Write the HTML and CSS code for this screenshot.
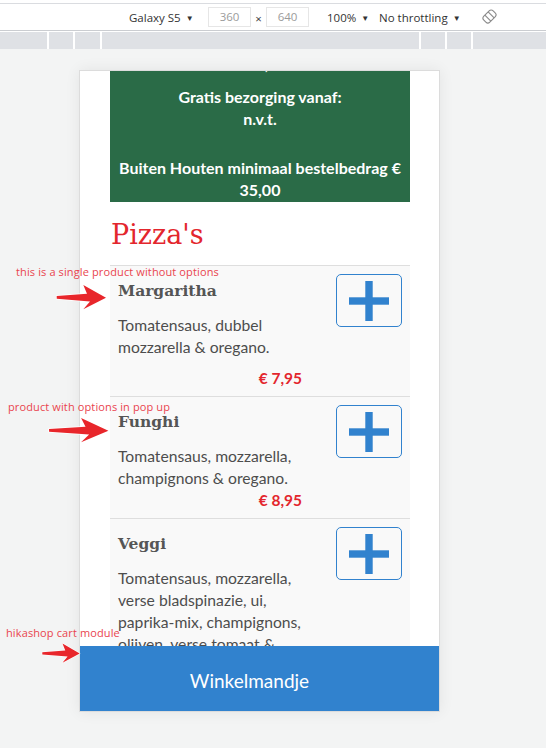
FILE: index.html
```html
<!DOCTYPE html>
<html lang="nl">
<head>
<meta charset="utf-8">
<title>Pizza's</title>
<link rel="stylesheet" href="styles.css">
</head>
<body>
<div class="devtools">
  <div class="toolbar">
    <span class="tb-device">Galaxy S5 <span class="caret">&#9660;</span></span>
    <span class="tb-dim">360</span>
    <span class="tb-x">&times;</span>
    <span class="tb-dim">640</span>
    <span class="tb-zoom">100% <span class="caret">&#9660;</span></span>
    <span class="tb-throttle">No throttling <span class="caret">&#9660;</span></span>
    <svg class="tb-rotate" viewBox="0 0 16 16" width="15" height="15">
      <g transform="rotate(45 8 8)" fill="none" stroke="#8a8a8a" stroke-width="1.2">
        <rect x="3.5" y="1" width="9" height="14" rx="3"/>
        <line x1="3.5" y1="5.5" x2="12.5" y2="5.5"/>
        <line x1="3.5" y1="10.5" x2="12.5" y2="10.5"/>
      </g>
    </svg>
  </div>
  <div class="ruler">
    <span class="seg seg-a"></span>
    <span class="seg seg-b"></span>
    <span class="seg seg-c"></span>
    <span class="seg seg-d"></span>
    <span class="seg seg-b"></span>
    <span class="seg seg-b"></span>
    <span class="seg seg-rest"></span>
  </div>
</div>

<main class="stage">
  <div class="phone">
    <div class="viewport">
      <div class="page scrolled">
        <section class="info">
          <p class="info-p1">&euro; 15,00</p>
          <p class="info-p2">Gratis bezorging vanaf:<br>n.v.t.</p>
          <p>Buiten Houten minimaal bestelbedrag &euro;<br>35,00</p>
        </section>

        <h2 class="cat-title">Pizza's</h2>

        <ul class="products">
          <li class="product product--first">
            <div class="product-info">
              <h3 class="product-name">Margaritha</h3>
              <p class="product-desc">Tomatensaus, dubbel<br>mozzarella &amp; oregano.</p>
              <p class="product-price">&euro; 7,95</p>
            </div>
            <button class="add-btn" type="button" aria-label="Toevoegen">
              <svg viewBox="0 0 40 40" width="40" height="40"><rect x="0" y="16.3" width="40" height="7.4"/><rect x="16.3" y="0" width="7.4" height="40"/></svg>
            </button>
          </li>
          <li class="product">
            <div class="product-info">
              <h3 class="product-name">Funghi</h3>
              <p class="product-desc">Tomatensaus, mozzarella,<br>champignons &amp; oregano.</p>
              <p class="product-price">&euro; 8,95</p>
            </div>
            <button class="add-btn" type="button" aria-label="Toevoegen">
              <svg viewBox="0 0 40 40" width="40" height="40"><rect x="0" y="16.3" width="40" height="7.4"/><rect x="16.3" y="0" width="7.4" height="40"/></svg>
            </button>
          </li>
          <li class="product">
            <div class="product-info">
              <h3 class="product-name">Veggi</h3>
              <p class="product-desc">Tomatensaus, mozzarella,<br>verse bladspinazie, ui,<br>paprika-mix, champignons,<br>olijven, verse tomaat &amp;</p>
            </div>
            <button class="add-btn" type="button" aria-label="Toevoegen">
              <svg viewBox="0 0 40 40" width="40" height="40"><rect x="0" y="16.3" width="40" height="7.4"/><rect x="16.3" y="0" width="7.4" height="40"/></svg>
            </button>
          </li>
        </ul>
      </div>
    </div>
    <div class="cart">Winkelmandje</div>
  </div>
</main>

<div class="notes">
  <span class="note note-1">this is a single product without options</span>
  <svg class="arrow arrow-1" viewBox="0 0 54 28" preserveAspectRatio="none"><polygon points="1.7,13 32,10.8 28.3,2 51,14.7 28.3,26.3 35,18.5 1.7,15.8"/></svg>
  <span class="note note-2">product with options in pop up</span>
  <svg class="arrow arrow-2" viewBox="0 0 54 28" preserveAspectRatio="none"><polygon points="1.7,13 32,10.8 28.3,2 51,14.7 28.3,26.3 35,18.5 1.7,15.8"/></svg>
  <span class="note note-3">hikashop cart module</span>
  <svg class="arrow arrow-3" viewBox="0 0 54 28" preserveAspectRatio="none"><polygon points="1.7,13 32,10.8 28.3,2 51,14.7 28.3,26.3 35,18.5 1.7,15.8"/></svg>
</div>
</body>
</html>
```

FILE: styles.css
```css
* { box-sizing: border-box; }

html, body {
  margin: 0;
  padding: 0;
}

body {
  position: relative;
  height: 748px;
  overflow: hidden;
  background: #f3f4f4;
  font-family: "Open Sans", "Noto Sans", sans-serif;
}

/* ---------- devtools chrome ---------- */
.devtools {
  background: #fff;
  padding-top: 3px;
}

.toolbar {
  height: 28px;
  border-top: 1px solid #dadce0;
  border-bottom: 1px solid #cbcdd1;
  display: flex;
  align-items: center;
  padding-left: 129px;
  font-size: 11.5px;
  color: #333;
}

.caret {
  font-size: 8px;
  vertical-align: 1px;
  margin-left: 2px;
}

.tb-device { width: 79px; white-space: nowrap; }

.tb-dim {
  width: 43px;
  height: 20px;
  border: 1px solid #e6e6e6;
  color: #9b9b9b;
  text-align: center;
  line-height: 18px;
}

.tb-x {
  width: 15px;
  text-align: center;
  color: #444;
  padding-top: 2px;
}

.tb-zoom { margin-left: 18px; width: 52px; white-space: nowrap; }
.tb-throttle { width: 103px; white-space: nowrap; }
.tb-rotate { display: block; margin-top: -2px; }

.ruler {
  margin-top: 1px;
  height: 17px;
  display: flex;
  gap: 2px;
  background: #fff;
}

.seg { background: #dfe1e5; height: 100%; }
.seg-a { width: 47px; }
.seg-b { width: 24px; }
.seg-c { width: 25px; }
.seg-d { width: 317px; }
.seg-rest { flex: 1; }

/* ---------- stage / phone ---------- */
.stage {
  padding: 21px 0 0 79px;
}

.phone {
  width: 361px;
  height: 642px;
  border: 1px solid #dcdcdc;
  background: #fff;
  display: flex;
  flex-direction: column;
  box-shadow: 0 0 14px rgba(0, 0, 0, 0.07);
}

.viewport {
  flex: 1;
  min-height: 0;
  overflow: hidden;
}

.page {
  padding: 0 29px 0 30px;
}

.scrolled { margin-top: -28px; }

.info {
  background: #2a6b47;
  color: #fff;
  text-align: center;
  font: 700 16px/22px Lato, "Open Sans", sans-serif;
  padding: 10px 4px 1px;
}

.info p { margin: 0; }
.info .info-p1 { margin-bottom: 11px; }
.info .info-p2 { margin-bottom: 27px; }

.cat-title {
  margin: 17px 0 14px 1px;
  font: 400 27px/32px "DejaVu Serif", serif;
  color: #e3262d;
}

.products {
  list-style: none;
  margin: 0;
  padding: 0;
}

.product {
  display: flex;
  align-items: flex-start;
  background: #f9f9f9;
  border-top: 1px solid #dedede;
  padding: 8px 8px 7px;
}

.product-info {
  flex: none;
  width: 184px;
}

.product-name {
  margin: 6px 0 0;
  font: 700 15.5px/22px "DejaVu Serif", serif;
  color: #555;
}

.product-desc {
  margin: 12px 0 0;
  font: 400 15.7px/22px Lato, "Open Sans", sans-serif;
  color: #4d4d4d;
  white-space: nowrap;
}

.product-price {
  margin: 0;
  text-align: right;
  font: 700 15.5px/22px Lato, "Open Sans", sans-serif;
  color: #e3262d;
}

.product--first .product-price { margin-top: 9px; }

.add-btn {
  margin-left: auto;
  width: 66px;
  height: 53px;
  padding: 0;
  border: 1px solid #3182ce;
  border-radius: 5px;
  background: transparent;
  display: flex;
  align-items: center;
  justify-content: center;
}

.add-btn svg { display: block; fill: #3182ce; }

.cart {
  flex: none;
  height: 65px;
  background: #3182ce;
  color: #fff;
  font: 400 19px Lato, "Open Sans", sans-serif;
  display: flex;
  align-items: center;
  justify-content: center;
  padding: 4px 20px 0 0;
}

/* ---------- annotations ---------- */
.note {
  position: absolute;
  font: 400 11px/14px "Open Sans", sans-serif;
  letter-spacing: 0.12px;
  color: #e9444e;
  white-space: nowrap;
}

.note-1 { left: 16px; top: 265px; }
.note-2 { left: 8px; top: 400px; }
.note-3 { left: 6px; top: 626px; }

.arrow {
  position: absolute;
  overflow: visible;
}

.arrow polygon {
  fill: #e8262b;
  stroke: #fff;
  stroke-width: 1.4;
  stroke-linejoin: round;
  paint-order: stroke;
}

.arrow-1 { left: 55px; top: 283px; width: 54px; height: 28px; }
.arrow-2 { left: 47px; top: 416px; width: 65px; height: 28px; }
.arrow-3 { left: 41px; top: 642px; width: 41px; height: 22px; }
```
